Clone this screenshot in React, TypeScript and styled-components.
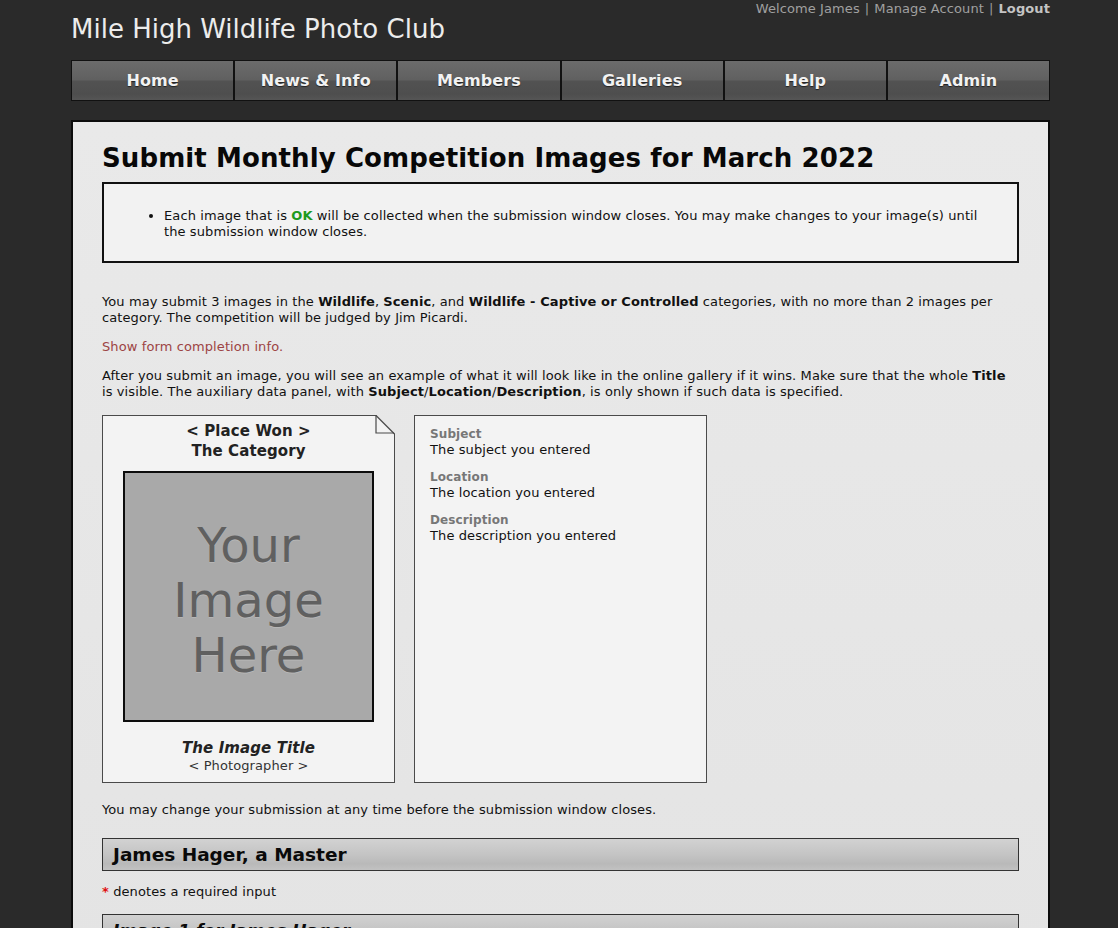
import React from "react";
import styled, { createGlobalStyle } from "styled-components";

const Global = createGlobalStyle`
  html, body { margin: 0; padding: 0; }
  body {
    background: #2a2a2a;
    font-family: "DejaVu Sans", Verdana, sans-serif;
    font-size: 13px;
    letter-spacing: 0.1px;
    color: #111;
  }
`;

const Page = styled.div`
  width: 979px;
  margin-left: 71px;
  padding-bottom: 40px;
`;

const Header = styled.header`
  display: flex;
  justify-content: space-between;
  align-items: flex-start;
  height: 60px;
`;

const SiteTitle = styled.h1`
  margin: 12px 0 0 0;
  font-weight: normal;
  font-size: 26px;
  line-height: 34px;
  letter-spacing: 0;
  color: #ececec;
`;

const UserLinks = styled.div`
  font-size: 13px;
  line-height: 18px;
  color: #9a9a9a;
  display: flex;
  gap: 5px;
`;

const UserLink = styled.a<{ $bold?: boolean }>`
  color: ${(p) => (p.$bold ? "#c4c4c4" : "#a0a0a0")};
  font-weight: ${(p) => (p.$bold ? "bold" : "normal")};
  text-decoration: none;
`;

const Nav = styled.nav`
  display: grid;
  grid-template-columns: repeat(6, 1fr);
  height: 41px;
  box-sizing: border-box;
  border: 1px solid #111;
  background: #111;
  gap: 2px;
`;

const NavItem = styled.a`
  display: flex;
  align-items: center;
  justify-content: center;
  color: #f2f2f2;
  font-weight: bold;
  font-size: 16px;
  text-decoration: none;
  text-shadow: 0 1px 1px rgba(0, 0, 0, 0.6);
  background: linear-gradient(
    to bottom,
    #6c6c6c 0%,
    #606060 48%,
    #525252 52%,
    #4e4e4e 85%,
    #555 100%
  );
`;

const Panel = styled.main`
  margin-top: 19px;
  background: linear-gradient(to bottom, #e9e9e9, #e4e4e4);
  border: 2px solid #0c0c0c;
  padding: 18px 29px 0 29px;
  min-height: 820px;
`;

const Heading = styled.h2`
  margin: 0 0 6px 0;
  font-size: 26px;
  line-height: 36px;
  letter-spacing: 0.1px;
  font-weight: bold;
  color: #080808;
`;

const Notice = styled.div`
  border: 2px solid #111;
  background: #f2f2f2;
  padding: 24px 20px 21px 0;
`;

const NoticeList = styled.ul`
  margin: 0;
  padding-left: 60px;
  line-height: 16px;
`;

const Ok = styled.b`
  color: #1e9a1e;
`;

const Para = styled.p`
  margin: 13px 0 0 0;
  line-height: 16px;
`;

const FirstPara = styled(Para)`
  margin-top: 31px;
`;

const FormLink = styled.a`
  display: block;
  margin-top: 13px;
  line-height: 16px;
  color: #9d4444;
  text-decoration: none;
`;

const Cards = styled.div`
  display: flex;
  gap: 19px;
  margin-top: 15px;
`;

const Card = styled.div`
  position: relative;
  width: 293px;
  height: 368px;
  box-sizing: border-box;
  border: 1px solid #4a4a4a;
  background: #f3f3f3;
`;

const PrizeCard = styled(Card)`
  display: flex;
  flex-direction: column;
  align-items: center;
  padding-top: 5px;
`;

const Fold = styled.svg`
  position: absolute;
  top: -1px;
  right: -1px;
`;

const CardHead = styled.div`
  font-weight: bold;
  font-size: 15px;
  line-height: 20px;
  color: #222;
  text-align: center;
`;

const ImageBox = styled.div`
  margin-top: 10px;
  width: 251px;
  height: 251px;
  box-sizing: border-box;
  border: 2px solid #0c0c0c;
  padding-top: 8px;
  background: #a9a9a9;
  display: flex;
  align-items: center;
  justify-content: center;
  text-align: center;
  font-size: 48px;
  line-height: 55px;
  letter-spacing: 0;
  color: #606060;
  text-shadow: 0 1px 0 rgba(255, 255, 255, 0.18);
`;

const ImageTitle = styled.div`
  margin-top: 16px;
  font-size: 15px;
  font-weight: bold;
  font-style: italic;
  line-height: 20px;
  color: #222;
`;

const Photographer = styled.div`
  font-size: 13px;
  line-height: 16px;
  color: #333;
`;

const InfoCard = styled(Card)`
  padding: 10px 15px;
`;

const Field = styled.div`
  margin-bottom: 11px;
`;

const FieldLabel = styled.div`
  font-size: 12px;
  font-weight: bold;
  color: #777;
  line-height: 16px;
`;

const FieldValue = styled.div`
  font-size: 13px;
  line-height: 16px;
  color: #111;
`;

const ChangeNote = styled.p`
  margin: 19px 0 0 0;
  line-height: 16px;
`;

const SectionBar = styled.div<{ $italic?: boolean }>`
  box-sizing: border-box;
  height: 33px;
  border: 1px solid #333;
  background: linear-gradient(
    to bottom,
    #d2d2d2 0%,
    #c4c4c4 50%,
    #b9b9b9 80%,
    #c2c2c2 100%
  );
  padding: 0 10px;
  display: flex;
  align-items: center;
  font-size: ${(p) => (p.$italic ? "17px" : "18.5px")};
  letter-spacing: 0;
  font-weight: bold;
  font-style: ${(p) => (p.$italic ? "italic" : "normal")};
  color: #0a0a0a;
`;

const FirstBar = styled(SectionBar)`
  margin-top: 20px;
`;

const Required = styled.p`
  margin: 13px 0 14px 0;
  line-height: 16px;
`;

const Star = styled.span`
  color: #e01010;
  font-weight: bold;
`;

export default function App() {
  return (
    <>
      <Global />
      <Page>
        <Header>
          <SiteTitle>Mile High Wildlife Photo Club</SiteTitle>
          <UserLinks>
            <UserLink>Welcome James</UserLink>|
            <UserLink>Manage Account</UserLink>|
            <UserLink $bold>Logout</UserLink>
          </UserLinks>
        </Header>
        <Nav>
          {["Home", "News & Info", "Members", "Galleries", "Help", "Admin"].map((n) => (
            <NavItem key={n}>{n}</NavItem>
          ))}
        </Nav>
        <Panel>
          <Heading>Submit Monthly Competition Images for March 2022</Heading>
          <Notice>
            <NoticeList>
              <li>
                Each image that is <Ok>OK</Ok> will be collected when the submission window
                closes. You may make changes to your image(s) until the submission window
                closes.
              </li>
            </NoticeList>
          </Notice>
          <FirstPara>
            You may submit 3 images in the <b>Wildlife</b>, <b>Scenic</b>, and{" "}
            <b>Wildlife - Captive or Controlled</b> categories, with no more than 2 images per
            category. The competition will be judged by Jim Picardi.
          </FirstPara>
          <FormLink>Show form completion info.</FormLink>
          <Para>
            After you submit an image, you will see an example of what it will look like in the
            online gallery if it wins. Make sure that the whole <b>Title</b> is visible. The
            auxiliary data panel, with <b>Subject</b>/<b>Location</b>/<b>Description</b>, is only
            shown if such data is specified.
          </Para>
          <Cards>
            <PrizeCard>
              <Fold width="20" height="20" viewBox="0 0 20 20">
                <polygon points="1,0 20,0 20,19" fill="#e7e7e7" />
                <polyline points="1,0 1,18 19,18" fill="none" stroke="#4a4a4a" strokeWidth="1.2" />
                <line x1="1" y1="0.5" x2="19.5" y2="19" stroke="#4a4a4a" strokeWidth="1.2" />
              </Fold>
              <CardHead>
                &lt; Place Won &gt;
                <br />
                The Category
              </CardHead>
              <ImageBox>
                Your
                <br />
                Image
                <br />
                Here
              </ImageBox>
              <ImageTitle>The Image Title</ImageTitle>
              <Photographer>&lt; Photographer &gt;</Photographer>
            </PrizeCard>
            <InfoCard>
              <Field>
                <FieldLabel>Subject</FieldLabel>
                <FieldValue>The subject you entered</FieldValue>
              </Field>
              <Field>
                <FieldLabel>Location</FieldLabel>
                <FieldValue>The location you entered</FieldValue>
              </Field>
              <Field>
                <FieldLabel>Description</FieldLabel>
                <FieldValue>The description you entered</FieldValue>
              </Field>
            </InfoCard>
          </Cards>
          <ChangeNote>You may change your submission at any time before the submission window closes.</ChangeNote>
          <FirstBar>James Hager, a Master</FirstBar>
          <Required>
            <Star>*</Star> denotes a required input
          </Required>
          <SectionBar $italic>Image 1 for James Hager</SectionBar>
        </Panel>
      </Page>
    </>
  );
}
